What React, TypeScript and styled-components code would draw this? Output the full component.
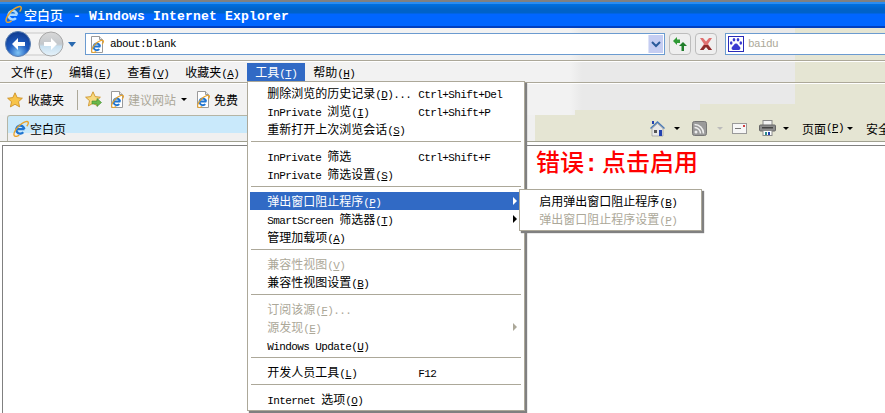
import React from "react";
import styled, { createGlobalStyle } from "styled-components";

const GlobalStyle = createGlobalStyle`
  html, body {
    margin: 0;
    height: 100%;
    overflow: hidden;
    background: #fff;
  }
  body {
    font-family: "Noto Sans CJK SC", "Liberation Sans", sans-serif;
    font-size: 12px;
    color: #000;
  }
`;

const BAR_BG = "linear-gradient(90deg, #f2f2f2 570px, #e9e9e9 582px, #e9e9e9 795px, #e5e5d3 795px)";

interface MenuEntry {
  label?: string;
  hot?: string;
  after?: string;
  shortcut?: string;
  disabled?: boolean;
  arrow?: boolean;
  active?: boolean;
  separator?: boolean;
}

const TOOLS_MENU: MenuEntry[] = [
  { label: "删除浏览的历史记录", hot: "D", after: "...", shortcut: "Ctrl+Shift+Del" },
  { label: "InPrivate 浏览", hot: "I", shortcut: "Ctrl+Shift+P" },
  { label: "重新打开上次浏览会话", hot: "S" },
  { separator: true },
  { label: "InPrivate 筛选", shortcut: "Ctrl+Shift+F" },
  { label: "InPrivate 筛选设置", hot: "S" },
  { separator: true },
  { label: "弹出窗口阻止程序", hot: "P", arrow: true, active: true },
  { label: "SmartScreen 筛选器", hot: "T", arrow: true },
  { label: "管理加载项", hot: "A" },
  { separator: true },
  { label: "兼容性视图", hot: "V", disabled: true },
  { label: "兼容性视图设置", hot: "B" },
  { separator: true },
  { label: "订阅该源", hot: "F", after: "...", disabled: true },
  { label: "源发现", hot: "E", disabled: true, arrow: true },
  { label: "Windows Update", hot: "U" },
  { separator: true },
  { label: "开发人员工具", hot: "L", shortcut: "F12" },
  { separator: true },
  { label: "Internet 选项", hot: "O" },
];

const MENU_BAR = [
  { label: "文件", hot: "F" },
  { label: "编辑", hot: "E" },
  { label: "查看", hot: "V" },
  { label: "收藏夹", hot: "A" },
  { label: "工具", hot: "T" },
  { label: "帮助", hot: "H" },
];

// latin runs get their own span because they are narrower than the CJK font
function Txt({ text }: { text: string }) {
  const parts = text.split(/([\u0000-\u00ff]+)/).filter(Boolean);
  return (
    <>
      {parts.map((p, i) =>
        /^[\u0000-\u00ff]/.test(p) ? <Latin key={i}>{p}</Latin> : <span key={i}>{p}</span>
      )}
    </>
  );
}

function Hot({ k }: { k: string }) {
  return (
    <Latin>
      (<u>{k}</u>)
    </Latin>
  );
}

function IeLogo({ size = 16, color = "#1f74d0" }: { size?: number; color?: string }) {
  return (
    <svg width={size} height={size} viewBox="0 0 16 16">
      <path
        d="M4.200 8.600h7.600M11.600 8.600a3.800 3.800 0 1 0-1 3"
        fill="none"
        stroke={color}
        strokeWidth="2.200"
      />
      <path
        d="M2.200 14.800C.6 12.600 4.800 6.200 9 3.500c3-2 5.600-2.700 6.200-1.500.5 1-.3 2.600-1.300 3.900M2.200 14.800c1 1 3 .5 4.600-.6"
        fill="none"
        stroke="#e8a32c"
        strokeWidth="1.300"
      />
    </svg>
  );
}

function IePage() {
  return (
    <PageIcon>
      <svg width="16" height="17" viewBox="0 0 16 17">
        <path d="M2.500.5h8l3 3v13h-11z" fill="#fff" stroke="#9a9a9a" />
        <path d="M10.500.5v3h3" fill="#e8e8e8" stroke="#9a9a9a" />
      </svg>
      <IeOverlay>
        <IeLogo size={14} />
      </IeOverlay>
    </PageIcon>
  );
}

function NavButtons() {
  return (
    <svg width="60" height="28" viewBox="0 0 60 28">
      <defs>
        <radialGradient id="backBall" cx=".5" cy=".85" r=".8">
          <stop offset="0" stopColor="#7fc4f5" />
          <stop offset=".5" stopColor="#1e5bbf" />
          <stop offset="1" stopColor="#123f94" />
        </radialGradient>
        <linearGradient id="fwdBall" x1="0" y1="0" x2="0" y2="1">
          <stop offset="0" stopColor="#d8d8d8" />
          <stop offset=".5" stopColor="#c4c8cc" />
          <stop offset=".6" stopColor="#c8e0f0" />
          <stop offset="1" stopColor="#e6f2fa" />
        </linearGradient>
      </defs>
      <rect x="10" y="3" width="46" height="22" rx="11" fill="#f4f4f4" stroke="#c8c8c8" />
      <circle cx="14" cy="14" r="12.500" fill="url(#backBall)" stroke="#5a7fb0" />
      <path d="M8 14l6-6v4h7v4h-7v4z" fill="#fff" />
      <circle cx="47" cy="14" r="12" fill="url(#fwdBall)" stroke="#a8a8a8" />
      <path d="M53 14l-6-6v4h-7v4h7v4z" fill="#fff" />
    </svg>
  );
}

function RefreshIcon() {
  return (
    <svg width="16" height="16" viewBox="0 0 16 16">
      <path d="M1 5l4-4v2.500h3V7H5v2z" fill="#2f9a35" />
      <path d="M15 9l-4-4-4 4h2.500v5H12V9z" fill="#1f7d2a" transform="translate(0 1)" />
    </svg>
  );
}

function StopIcon() {
  return (
    <svg width="16" height="16" viewBox="0 0 16 16">
      <path d="M2 2h3l3 3.500L11 2h3l-4 6 4 6h-3L8 10.500 5 14H2l4-6z" fill="#e07070" />
      <path d="M5.500 14H2l4-5h4l4 5h-3.500L8 11z" fill="#8c2b2b" />
    </svg>
  );
}

function BaiduIcon() {
  return (
    <BaiduBox>
      <svg width="14" height="14" viewBox="0 0 14 14" fill="#3a3ad0">
        <ellipse cx="2.200" cy="6" rx="1.300" ry="1.800" />
        <ellipse cx="5" cy="2.800" rx="1.300" ry="1.800" />
        <ellipse cx="9" cy="2.800" rx="1.300" ry="1.800" />
        <ellipse cx="11.800" cy="6" rx="1.300" ry="1.800" />
        <path d="M7 6.500c-2 0-2 2-3.500 3C2 10.500 2.500 13 4.500 13h5c2 0 2.500-2.500 1-3.500C9 8.500 9 6.500 7 6.500z" />
      </svg>
    </BaiduBox>
  );
}

function StarIcon() {
  return (
    <svg width="16" height="16" viewBox="0 0 16 16">
      <path d="M8 .8l2.200 4.800 5.200.6-3.900 3.500 1.100 5.200L8 12.300l-4.600 2.600 1.100-5.200L.6 6.200l5.200-.6z" fill="#f8c44a" stroke="#c98a1c" strokeWidth=".8" />
    </svg>
  );
}

function StarAddIcon() {
  return (
    <svg width="17" height="17" viewBox="0 0 17 17">
      <path d="M8 .8l2.200 4.800 5.200.6-3.900 3.500 1.100 5.200L8 12.300l-4.600 2.600 1.100-5.200L.6 6.200l5.200-.6z" fill="#f8da80" stroke="#c98a1c" strokeWidth=".8" />
      <path d="M7 10h5V7.500l4.500 4-4.500 4V13H7z" fill="#6ab84a" stroke="#3d8a2c" strokeWidth=".6" />
    </svg>
  );
}

function HomeIcon() {
  return (
    <svg width="17" height="17" viewBox="0 0 17 17">
      <path d="M8.500 1L1 8l1 1 6.500-6 6.500 6 1-1z" fill="#4a7ab8" />
      <rect x="3" y="1" width="2" height="3" fill="#2342b0" />
      <path d="M3 8.500l5.500-5 5.500 5V16H3z" fill="#e8e8e8" stroke="#8a8a8a" strokeWidth=".6" />
      <rect x="10" y="10" width="3" height="6" fill="#2342b0" />
      <rect x="5" y="10" width="3" height="3" fill="#555" />
    </svg>
  );
}

function RssIcon() {
  return (
    <svg width="15" height="15" viewBox="0 0 15 15">
      <rect x=".5" y=".5" width="14" height="14" rx="2" fill="#9a9a9a" stroke="#777" />
      <circle cx="4" cy="11" r="1.500" fill="#eee" />
      <path d="M2.500 6.500a6 6 0 0 1 6 6M2.500 3.500a9 9 0 0 1 9 9" fill="none" stroke="#eee" strokeWidth="1.500" />
    </svg>
  );
}

function MailIcon() {
  return (
    <svg width="15" height="11" viewBox="0 0 15 11">
      <rect x=".5" y=".5" width="14" height="10" fill="#f6f6f6" stroke="#9a9a9a" />
      <rect x="3" y="5" width="6" height="1" fill="#777" />
      <rect x="11" y="2" width="2" height="2" fill="#d04040" />
    </svg>
  );
}

function PrinterIcon() {
  return (
    <svg width="17" height="16" viewBox="0 0 17 16">
      <rect x="4" y=".5" width="9" height="5" fill="#f4f4f4" stroke="#8a8a8a" />
      <rect x=".5" y="5" width="16" height="6" rx="1" fill="#8c8c8c" stroke="#666" />
      <rect x="3" y="7" width="11" height="1.500" fill="#444" />
      <rect x="4" y="10.500" width="9" height="5" fill="#fff" stroke="#8a8a8a" />
      <rect x="6" y="12" width="2" height="3" fill="#2a8a8a" />
      <rect x="9" y="12" width="2" height="3" fill="#2342b0" />
    </svg>
  );
}

function MenuItemRow({ item }: { item: MenuEntry }) {
  return (
    <MenuRow $active={item.active} $disabled={item.disabled}>
      <span>
        <Txt text={item.label || ""} />
        {item.hot && <Hot k={item.hot} />}
        {item.after && <Latin>{item.after}</Latin>}
      </span>
      <Latin>{item.shortcut}</Latin>
      {item.arrow && <SubArrow $active={item.active} $disabled={item.disabled} />}
      {item.active && (
        <SubMenu>
          <SubRow>
            启用弹出窗口阻止程序
            <Hot k="B" />
          </SubRow>
          <SubRow $disabled>
            弹出窗口阻止程序设置
            <Hot k="P" />
          </SubRow>
        </SubMenu>
      )}
    </MenuRow>
  );
}

export default function App() {
  return (
    <>
      <GlobalStyle />
      <Window>
        <TitleBar>
          <IeLogo size={18} color="#a8d8ff" />
          <TitleText>
            空白页<TitleLatin> - Windows Internet Explorer</TitleLatin>
          </TitleText>
        </TitleBar>

        <AddressRow>
          <NavButtons />
          <NavDrop />
          <AddressBox>
            <IePage />
            <AddressText>about:blank</AddressText>
            <DropButton>
              <svg width="10" height="7" viewBox="0 0 10 7">
                <path d="M1 1l4 4 4-4" fill="none" stroke="#2a5a9a" strokeWidth="2" />
              </svg>
            </DropButton>
          </AddressBox>
          <ToolButton>
            <RefreshIcon />
          </ToolButton>
          <ToolButton>
            <StopIcon />
          </ToolButton>
          <SearchBox>
            <BaiduIcon />
            <SearchText>baidu</SearchText>
          </SearchBox>
        </AddressRow>

        <MenuBar>
          {MENU_BAR.map((m) => (
            <MenuBarItem key={m.label} $open={m.hot === "T"}>
              {m.label}
              <Hot k={m.hot} />
              {m.hot === "T" && (
                <Dropdown>
                  {TOOLS_MENU.map((item, i) =>
                    item.separator ? <Separator key={i} /> : <MenuItemRow key={i} item={item} />
                  )}
                </Dropdown>
              )}
            </MenuBarItem>
          ))}
        </MenuBar>

        <FavoritesBar>
          <FavButton>
            <StarIcon />
            收藏夹
          </FavButton>
          <FavDivider />
          <StarAddIcon />
          <LinkItem $muted>
            <IePage />
            建议网站
            <Caret $l={2} $r={1} />
          </LinkItem>
          <LinkItem>
            <IePage />
            免费
          </LinkItem>
        </FavoritesBar>

        <TabRow>
          <Tab>
            <IeLogo size={17} />
            空白页
          </Tab>
          <CommandBar>
            <HomeIcon />
            <Caret $l={8} $r={12} />
            <RssIcon />
            <Caret $l={10} $r={9} $muted />
            <IconSlot>
              <MailIcon />
            </IconSlot>
            <PrinterIcon />
            <Caret $l={7} $r={13} />
            <CommandText>
              页面
              <Hot k="P" />
              <Caret $l={3} $r={13} />
            </CommandText>
            <CommandText>安全</CommandText>
          </CommandBar>
        </TabRow>

        <TabFooter />

        <Content>
          <ErrorNote>
            错误<ErrorColon>:</ErrorColon>点击启用
          </ErrorNote>
        </Content>
      </Window>
    </>
  );
}

const Window = styled.div`
  width: 885px;
  height: 413px;
  display: flex;
  flex-direction: column;
  overflow: hidden;
  white-space: nowrap;
`;

const Latin = styled.span`
  font-family: "Liberation Mono", monospace;
  font-size: 11px;
  letter-spacing: -0.6px;
`;

const TitleBar = styled.div`
  height: 28px;
  flex: none;
  box-sizing: border-box;
  padding: 0 0 0 4px;
  display: flex;
  align-items: center;
  gap: 2px;
  background: linear-gradient(
    180deg,
    #808080 0,
    #808080 2px,
    #2a8cf0 2px,
    #2a8cf0 4px,
    #0070e0 4px,
    #0062c8 9px,
    #0062c8 13px,
    #0066ff 14px,
    #0066ff 26px,
    #0040c0 26px
  );
`;

const TitleText = styled.span`
  color: #fff;
  font-size: 13px;
  font-weight: 500;
`;

const TitleLatin = styled.span`
  margin-left: 2px;
  font-family: "Liberation Mono", monospace;
  font-weight: 700;
  letter-spacing: 0.2px;
`;

const AddressRow = styled.div`
  height: 33px;
  flex: none;
  box-sizing: border-box;
  padding: 0 0 0 4px;
  display: flex;
  align-items: center;
  border-bottom: 1px solid #aca899;
  background: ${BAR_BG};
`;

const NavDrop = styled.span`
  width: 0;
  height: 0;
  margin: 0 9px 0 4px;
  border-left: 4px solid transparent;
  border-right: 4px solid transparent;
  border-top: 5px solid #2a6ab0;
`;

const AddressBox = styled.div`
  width: 580px;
  height: 22px;
  box-sizing: border-box;
  display: flex;
  align-items: center;
  padding: 0 1px 0 3px;
  background: #fff;
  border: 1px solid #6b9bd0;
`;

const PageIcon = styled.span`
  position: relative;
  width: 16px;
  height: 17px;
  flex: none;
  display: inline-block;
`;

const IeOverlay = styled.span`
  position: absolute;
  left: 1px;
  bottom: 0;
  line-height: 0;
`;

const AddressText = styled(Latin)`
  margin-left: 5px;
  flex: 1;
`;

const DropButton = styled.span`
  width: 14px;
  height: 18px;
  display: flex;
  align-items: center;
  justify-content: center;
  background: #c5cdf2;
  border-left: 1px solid #dfe4f8;
`;

const ToolButton = styled.span`
  width: 22px;
  height: 22px;
  box-sizing: border-box;
  margin-left: 4px;
  display: flex;
  align-items: center;
  justify-content: center;
  border: 1px solid #bdbdbd;
  border-radius: 4px;
  background: #efefef;
`;

const SearchBox = styled.div`
  flex: 1;
  height: 22px;
  box-sizing: border-box;
  margin: 0 -2px 0 8px;
  display: flex;
  align-items: center;
  padding-left: 2px;
  background: #fff;
  border: 1px solid #6b9bd0;
`;

const BaiduBox = styled.span`
  width: 16px;
  height: 16px;
  box-sizing: border-box;
  display: flex;
  align-items: center;
  justify-content: center;
  border: 1px solid #2a2ab8;
  background: #fff;
`;

const SearchText = styled(Latin)`
  margin-left: 4px;
  color: #aca899;
`;

const MenuBar = styled.div`
  height: 21px;
  flex: none;
  box-sizing: border-box;
  margin-top: 1px;
  padding: 1px 0 0 3px;
  display: flex;
  align-items: flex-start;
  border-bottom: 1px solid #aca899;
  background: ${BAR_BG};
`;

const MenuBarItem = styled.div<{ $open?: boolean }>`
  position: relative;
  height: 18px;
  line-height: 17px;
  padding: 0 8px;
  color: ${(p) => (p.$open ? "#fff" : "#000")};
  background: ${(p) => (p.$open ? "#316ac5" : "transparent")};
`;

const Dropdown = styled.div`
  position: absolute;
  left: 0;
  top: 18px;
  z-index: 10;
  width: 278px;
  box-sizing: border-box;
  padding: 2px;
  color: #000;
  background: #fff;
  border: 1px solid #aca899;
  box-shadow: 2px 2px 1px #808080;
`;

const MenuRow = styled.div<{ $active?: boolean; $disabled?: boolean }>`
  position: relative;
  height: 18px;
  line-height: 17px;
  display: grid;
  grid-template-columns: 151px 1fr;
  align-items: baseline;
  padding-left: 17px;
  color: ${(p) => (p.$active ? "#fff" : p.$disabled ? "#aca899" : "#000")};
  background: ${(p) => (p.$active ? "#316ac5" : "transparent")};
`;

const SubArrow = styled.span<{ $active?: boolean; $disabled?: boolean }>`
  position: absolute;
  right: 5px;
  top: 5px;
  width: 0;
  height: 0;
  border-top: 4px solid transparent;
  border-bottom: 4px solid transparent;
  border-left: 4px solid ${(p) => (p.$active ? "#fff" : p.$disabled ? "#aca899" : "#000")};
`;

const Separator = styled.div`
  height: 1px;
  margin: 3px 1px 5px 1px;
  background: #aca899;
`;

const SubMenu = styled.div`
  position: absolute;
  left: 269px;
  top: -3px;
  z-index: 11;
  width: 183px;
  box-sizing: border-box;
  padding: 2px;
  color: #000;
  background: #fff;
  border: 1px solid #aca899;
  box-shadow: 2px 2px 1px #808080;
`;

const SubRow = styled.div<{ $disabled?: boolean }>`
  height: 18px;
  line-height: 17px;
  padding-left: 17px;
  color: ${(p) => (p.$disabled ? "#aca899" : "#000")};
`;

const FavoritesBar = styled.div`
  height: 32px;
  flex: none;
  box-sizing: border-box;
  border-top: 1px solid #fff;
  padding: 0 0 0 7px;
  display: flex;
  align-items: center;
  background:
    linear-gradient(#e5e5d3, #e5e5d3) 575px 100% / 100% 5px no-repeat,
    linear-gradient(#e5e5d3, #e5e5d3) 700px 100% / 100% 11px no-repeat,
    ${BAR_BG};
`;

const FavButton = styled.span`
  display: flex;
  align-items: center;
  gap: 5px;
`;

const FavDivider = styled.span`
  width: 1px;
  height: 20px;
  margin: 0 7px 0 13px;
  background: #aca899;
`;

const LinkItem = styled.span<{ $muted?: boolean }>`
  display: flex;
  align-items: center;
  gap: 3px;
  margin-left: 7px;
  color: ${(p) => (p.$muted ? "#aca899" : "#000")};
`;

const Caret = styled.span<{ $muted?: boolean; $l: number; $r: number }>`
  width: 0;
  height: 0;
  display: inline-block;
  margin: 0 ${(p) => p.$r}px 0 ${(p) => p.$l}px;
  border-left: 3px solid transparent;
  border-right: 3px solid transparent;
  border-top: 3px solid ${(p) => (p.$muted ? "#bbb" : "#000")};
`;

const TabRow = styled.div`
  height: 26px;
  flex: none;
  display: flex;
  align-items: flex-end;
  padding-left: 7px;
  background: linear-gradient(90deg, #f0f0f0 535px, #e5e5d3 535px);
  border-bottom: 1px solid #a0a090;
`;

const Tab = styled.div`
  width: 250px;
  height: 26px;
  box-sizing: border-box;
  padding: 0 0 0 4px;
  display: flex;
  align-items: center;
  gap: 1px;
  border: 1px solid #b5b5a5;
  border-bottom: none;
  border-radius: 3px 0 0 0;
  background: linear-gradient(180deg, #c9e9fb 17px, #f0f0f0 17px);
`;

const CommandBar = styled.div`
  margin-left: auto;
  height: 26px;
  width: 236px;
  flex: none;
  display: flex;
  align-items: center;

  & > * {
    flex: none;
  }
`;

const IconSlot = styled.span`
  margin-right: 12px;
  line-height: 0;
`;

const CommandText = styled.span`
  display: flex;
  align-items: center;
`;

const TabFooter = styled.div`
  height: 3px;
  flex: none;
  background: #fff;
`;

const Content = styled.div`
  flex: 1;
  margin-left: 2px;
  border-top: 1px solid #808080;
  border-left: 1px solid #808080;
  background: #fff;
`;

const ErrorNote = styled.div`
  padding: 0 0 0 533px;
  height: 30px;
  line-height: 30px;
  color: #f00;
  font-size: 24px;
  font-weight: 500;
`;

const ErrorColon = styled.span`
  font-family: "Liberation Mono", monospace;
  font-weight: 700;
  letter-spacing: 3.6px;
`;
